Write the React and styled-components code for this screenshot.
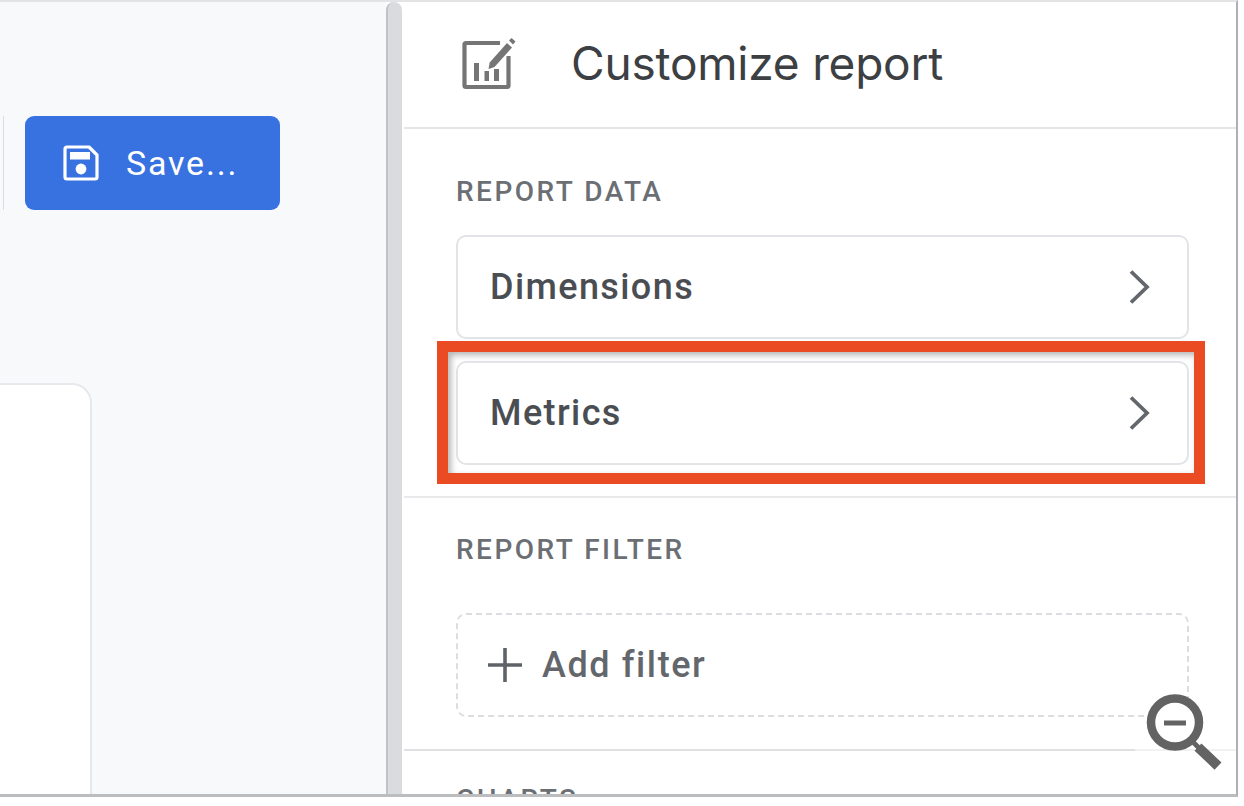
import React from 'react';
import styled, { createGlobalStyle } from 'styled-components';

const Global = createGlobalStyle`
  html, body { margin: 0; padding: 0; background: #fff; }
  body { font-family: Roboto, "Liberation Sans", sans-serif; }
  * { box-sizing: border-box; }
`;

const Page = styled.div`
  width: 1244px;
  height: 806px;
  overflow: hidden;
  position: relative;
  background: #fff;
`;
const Frame = styled.div`
  width: 1238px;
  height: 797px;
  display: flex;
  overflow: hidden;
  border-top: 2px solid #e2e3e5;
  border-right: 2px solid #aeb0b3;
  border-bottom: 3px solid #bcbdbf;
`;
const Canvas = styled.div`
  width: 386px;
  flex: none;
  background: #f8f9fb;
  display: flex;
  flex-direction: column;
`;
const Toolbar = styled.div`
  display: flex;
  align-items: stretch;
  gap: 21px;
  padding: 114px 0 0 3px;
`;
const ToolDivider = styled.div`
  width: 1px;
  background: #dadce0;
`;
const SaveButton = styled.button`
  width: 255px;
  height: 94px;
  border: none;
  border-radius: 9px;
  background: #3871e0;
  color: #fff;
  font: 400 34px Roboto, sans-serif;
  letter-spacing: 1.8px;
  display: flex;
  align-items: center;
  gap: 27px;
  padding: 0 0 0 38px;
`;
const ReportCard = styled.div`
  width: 92px;
  flex: 1;
  margin-top: 173px;
  background: #fff;
  border: 2px solid #e6e8ec;
  border-left: none;
  border-bottom: none;
  border-top-right-radius: 20px;
`;
const Splitter = styled.div`
  width: 16px;
  flex: none;
  background: #d9dbdf;
  border-left: 2px solid #c0c2c6;
  border-radius: 8px 8px 0 0;
`;
const Panel = styled.aside`
  flex: 1;
  background: #fff;
  display: flex;
  flex-direction: column;
  min-width: 0;
  padding-left: 2px;
`;
const PanelHeader = styled.header`
  height: 127px;
  flex: none;
  display: flex;
  align-items: center;
  gap: 54px;
  padding: 0 0 3px 57px;
  border-bottom: 2px solid #e4e5e7;
`;
const PanelTitle = styled.h1`
  margin: 0;
  font: 400 46px Inter, Roboto, sans-serif;
  letter-spacing: -0.2px;
  color: #3c4043;
`;
const Section = styled.section`
  flex: none;
  padding: 0 47px 0 52px;
  display: flex;
  flex-direction: column;
  height: ${p => p.$height}px;
  border-bottom: 2px solid #e8e9eb;
  ${p => p.$split && 'border-image: linear-gradient(to right, #dfe0e2 730px, #f1f1f2 730px) 1;'}
`;
const SectionLabel = styled.h2`
  margin: 0;
  flex: none;
  height: 30px;
  font: 500 28px/30px Roboto, sans-serif;
  letter-spacing: 2.5px;
  color: #6b6f74;
  text-transform: uppercase;
  margin-top: ${p => p.$top}px;
  margin-bottom: ${p => p.$bottom}px;
`;
const FieldCard = styled.div`
  position: relative;
  flex: none;
  height: 104px;
  border: 2px solid #e3e4e7;
  border-radius: 10px;
  padding: 0 35px 0 32px;
  display: flex;
  align-items: center;
  justify-content: space-between;
  margin-bottom: 22px;
  font: 500 36px Roboto, sans-serif;
  letter-spacing: 1.4px;
  color: #4a4e53;
`;
const Highlight = styled.div`
  position: absolute;
  left: -21px;
  right: -18px;
  top: -22px;
  bottom: -21px;
  border: 11px solid #eb4b23;
  box-shadow: inset 3px 3px 6px rgba(0, 0, 0, 0.3);
  pointer-events: none;
`;
const DashedCard = styled.div`
  flex: none;
  height: 104px;
  border: 2px dashed #dcdde0;
  border-radius: 10px;
  padding: 0 0 0 28px;
  display: flex;
  align-items: center;
  gap: 18px;
  font: 500 36px Roboto, sans-serif;
  letter-spacing: 1.6px;
  color: #63676c;
`;
const CutLabel = styled(SectionLabel)`
  margin-left: 52px;
`;
const ZoomMark = styled.svg`
  position: absolute;
  left: 1144px;
  top: 692px;
`;

const SaveIcon = () => (
  <svg width="36" height="36" viewBox="0 0 36 36" fill="none">
    <path d="M4 2h22l8 8v22a2 2 0 0 1-2 2H4a2 2 0 0 1-2-2V4a2 2 0 0 1 2-2z" stroke="#fff" strokeWidth="3.2" strokeLinejoin="round" />
    <rect x="7" y="7" width="20" height="7.5" fill="#fff" />
    <circle cx="18" cy="24" r="5.4" fill="#fff" />
  </svg>
);
const CustomizeIcon = () => (
  <svg width="56" height="56" viewBox="0 0 56 56" fill="none">
    <path d="M39 8H5a1.5 1.5 0 0 0-1.5 1.5v41A1.5 1.5 0 0 0 5 52h41a1.5 1.5 0 0 0 1.5-1.5V21" stroke="#757575" strokeWidth="4.2" />
    <path d="M29 31L50 7" stroke="#fff" strokeWidth="12" />
    <path d="M27.5 34l1.2-6.5L46 8l5 4.5L33.500 32z" fill="#757575" />
    <path d="M48 5.500l2.500-2.500 4 3.600-2.500 2.800z" fill="#757575" />
    <path d="M13 28h5v18h-5zM23.500 36H28v10h-4.500zM33 34h5v12h-5z" fill="#757575" />
  </svg>
);
const Chevron = () => (
  <svg width="24" height="38" viewBox="0 0 24 38" fill="none">
    <path d="M3 3.500L19 19 3 34.500" stroke="#63676c" strokeWidth="3.8" />
  </svg>
);
const Plus = () => (
  <svg width="38" height="38" viewBox="0 0 38 38" fill="none">
    <path d="M19 2v34M2 19h34" stroke="#5f6368" strokeWidth="3.6" />
  </svg>
);

export default function App() {
  return (
    <Page>
      <Global />
      <Frame>
        <Canvas>
          <Toolbar>
            <ToolDivider />
            <SaveButton>
              <SaveIcon />
              Save...
            </SaveButton>
          </Toolbar>
          <ReportCard />
        </Canvas>
        <Splitter />
        <Panel>
          <PanelHeader>
            <CustomizeIcon />
            <PanelTitle>Customize report</PanelTitle>
          </PanelHeader>
          <Section $height={369}>
            <SectionLabel $top={48} $bottom={28}>Report data</SectionLabel>
            <FieldCard>
              Dimensions
              <Chevron />
            </FieldCard>
            <FieldCard>
              Metrics
              <Chevron />
              <Highlight />
            </FieldCard>
          </Section>
          <Section $height={253} $split>
            <SectionLabel $top={37} $bottom={48}>Report filter</SectionLabel>
            <DashedCard>
              <Plus />
              Add filter
            </DashedCard>
          </Section>
          <CutLabel $top={34} $bottom={0}>Charts</CutLabel>
        </Panel>
      </Frame>
      <ZoomMark width="84" height="84" viewBox="0 0 84 84" fill="none">
        <circle cx="31" cy="30.500" r="24" fill="#fff" stroke="#636363" strokeWidth="8.500" />
        <path d="M20 31h22" stroke="#636363" strokeWidth="5" />
        <path d="M49 50l6 6" stroke="#636363" strokeWidth="5" />
        <path d="M54 55l20 19" stroke="#636363" strokeWidth="10" />
      </ZoomMark>
    </Page>
  );
}
